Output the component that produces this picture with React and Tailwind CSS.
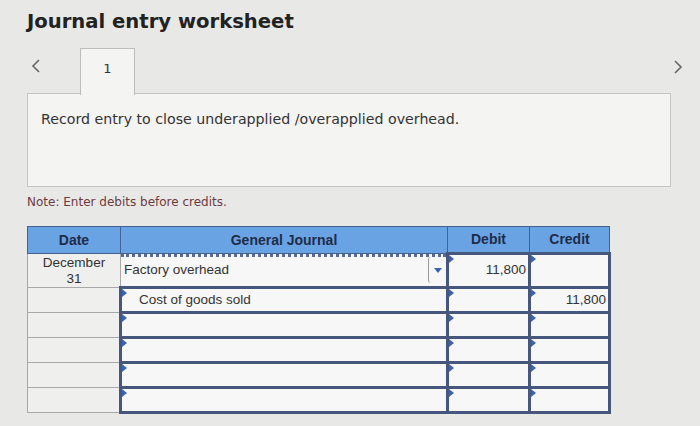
import React from "react";

const Marker = () => (
  <span className="absolute left-0 top-0 w-0 h-0 border-t-[4px] border-b-[4px] border-l-[5px] border-t-transparent border-b-transparent border-l-[#3b64b0]" />
);

function InputCell({ children, align = "left", indent = false }) {
  return (
    <td className="relative border-[3px] border-[#46567c] bg-[#f7f7f7] p-0">
      <Marker />
      <div className={`px-[2px] ${align === "right" ? "text-right" : "text-left"} ${indent ? "pl-[17px]" : ""}`}>
        {children}
      </div>
    </td>
  );
}

export default function App() {
  const emptyRows = [0, 1, 2, 3];

  return (
    <div className="w-[700px] h-[426px] bg-[#e8e8e7] relative overflow-hidden" style={{ fontFamily: "'DejaVu Sans', Verdana, sans-serif" }}>
      <h1 className="absolute left-[27px] top-[7px] text-[19.6px] font-bold text-[#222]">Journal entry worksheet</h1>

      {/* nav chevrons */}
      <svg className="absolute left-[30px] top-[58px]" width="12" height="16" viewBox="0 0 12 16">
        <path d="M9 2 L3 8 L9 14" fill="none" stroke="#666" strokeWidth="1.6" />
      </svg>
      <svg className="absolute left-[672px] top-[59px]" width="12" height="16" viewBox="0 0 12 16">
        <path d="M3 2 L9 8 L3 14" fill="none" stroke="#666" strokeWidth="1.6" />
      </svg>

      {/* tab + content box */}
      <div className="absolute left-[80px] top-[48px] w-[55px] h-[47px] bg-[#f4f4f3] border border-[#bdbdbd] border-b-0 z-10 flex justify-center pt-[10px] text-[13px] text-[#333]">1</div>
      <div className="absolute left-[27px] top-[93px] w-[644px] h-[94px] bg-[#f4f4f3] border border-[#c4c4c4]">
        <p className="mt-[15px] ml-[13px] text-[14.2px] text-[#333]">Record entry to close underapplied /overapplied overhead.</p>
      </div>

      <p className="absolute left-[27px] top-[193px] text-[12px] text-[#6e3a3e]">Note: Enter debits before credits.</p>

      <div className="absolute left-[27px] top-[226px]" style={{ fontFamily: "'Liberation Sans', Arial, sans-serif" }}>
        <table className="border-collapse text-[13.5px] text-[#333]">
          <colgroup>
            <col style={{ width: 93 }} />
            <col style={{ width: 327 }} />
            <col style={{ width: 82 }} />
            <col style={{ width: 80 }} />
          </colgroup>
          <thead>
            <tr className="h-[27px] bg-[#6aa3e4] text-[#1e2c48] text-[14px]">
              <th className="border border-[#45628f] font-bold pt-[1px]">Date</th>
              <th className="border border-[#45628f] font-bold pt-[1px]">General Journal</th>
              <th className="border border-[#45628f] font-bold">Debit</th>
              <th className="border border-[#45628f] font-bold">Credit</th>
            </tr>
          </thead>
          <tbody>
            <tr className="h-[34px]">
              <td className="border border-[#a8a8a8] bg-[#efefee] text-center leading-[16px] align-middle">December<br />31</td>
              <td className="relative border border-[#8a93aa] bg-[#f7f7f7] p-0">
                <span className="absolute left-0 right-0 top-0 border-t-[3px] border-dotted border-[#5a6a90]" />
                <div className="flex items-center h-[30px]">
                  <span className="pl-[3px] flex-1">Factory overhead</span>
                  <span className="h-[26px] w-[18px] border-l border-[#999] rounded-l-[3px] flex items-center justify-center">
                    <span className="w-0 h-0 border-l-[4px] border-r-[4px] border-t-[5px] border-l-transparent border-r-transparent border-t-[#3b64b0]" />
                  </span>
                </div>
              </td>
              <InputCell align="right">11,800</InputCell>
              <InputCell />
            </tr>
            <tr className="h-[25px]">
              <td className="border border-[#a8a8a8] bg-[#efefee]" />
              <InputCell indent>Cost of goods sold</InputCell>
              <InputCell />
              <InputCell align="right">11,800</InputCell>
            </tr>
            {emptyRows.map((r) => (
              <tr key={r} className="h-[25px]">
                <td className="border border-[#a8a8a8] bg-[#efefee]" />
                <InputCell />
                <InputCell />
                <InputCell />
              </tr>
            ))}
          </tbody>
        </table>
      </div>
    </div>
  );
}
